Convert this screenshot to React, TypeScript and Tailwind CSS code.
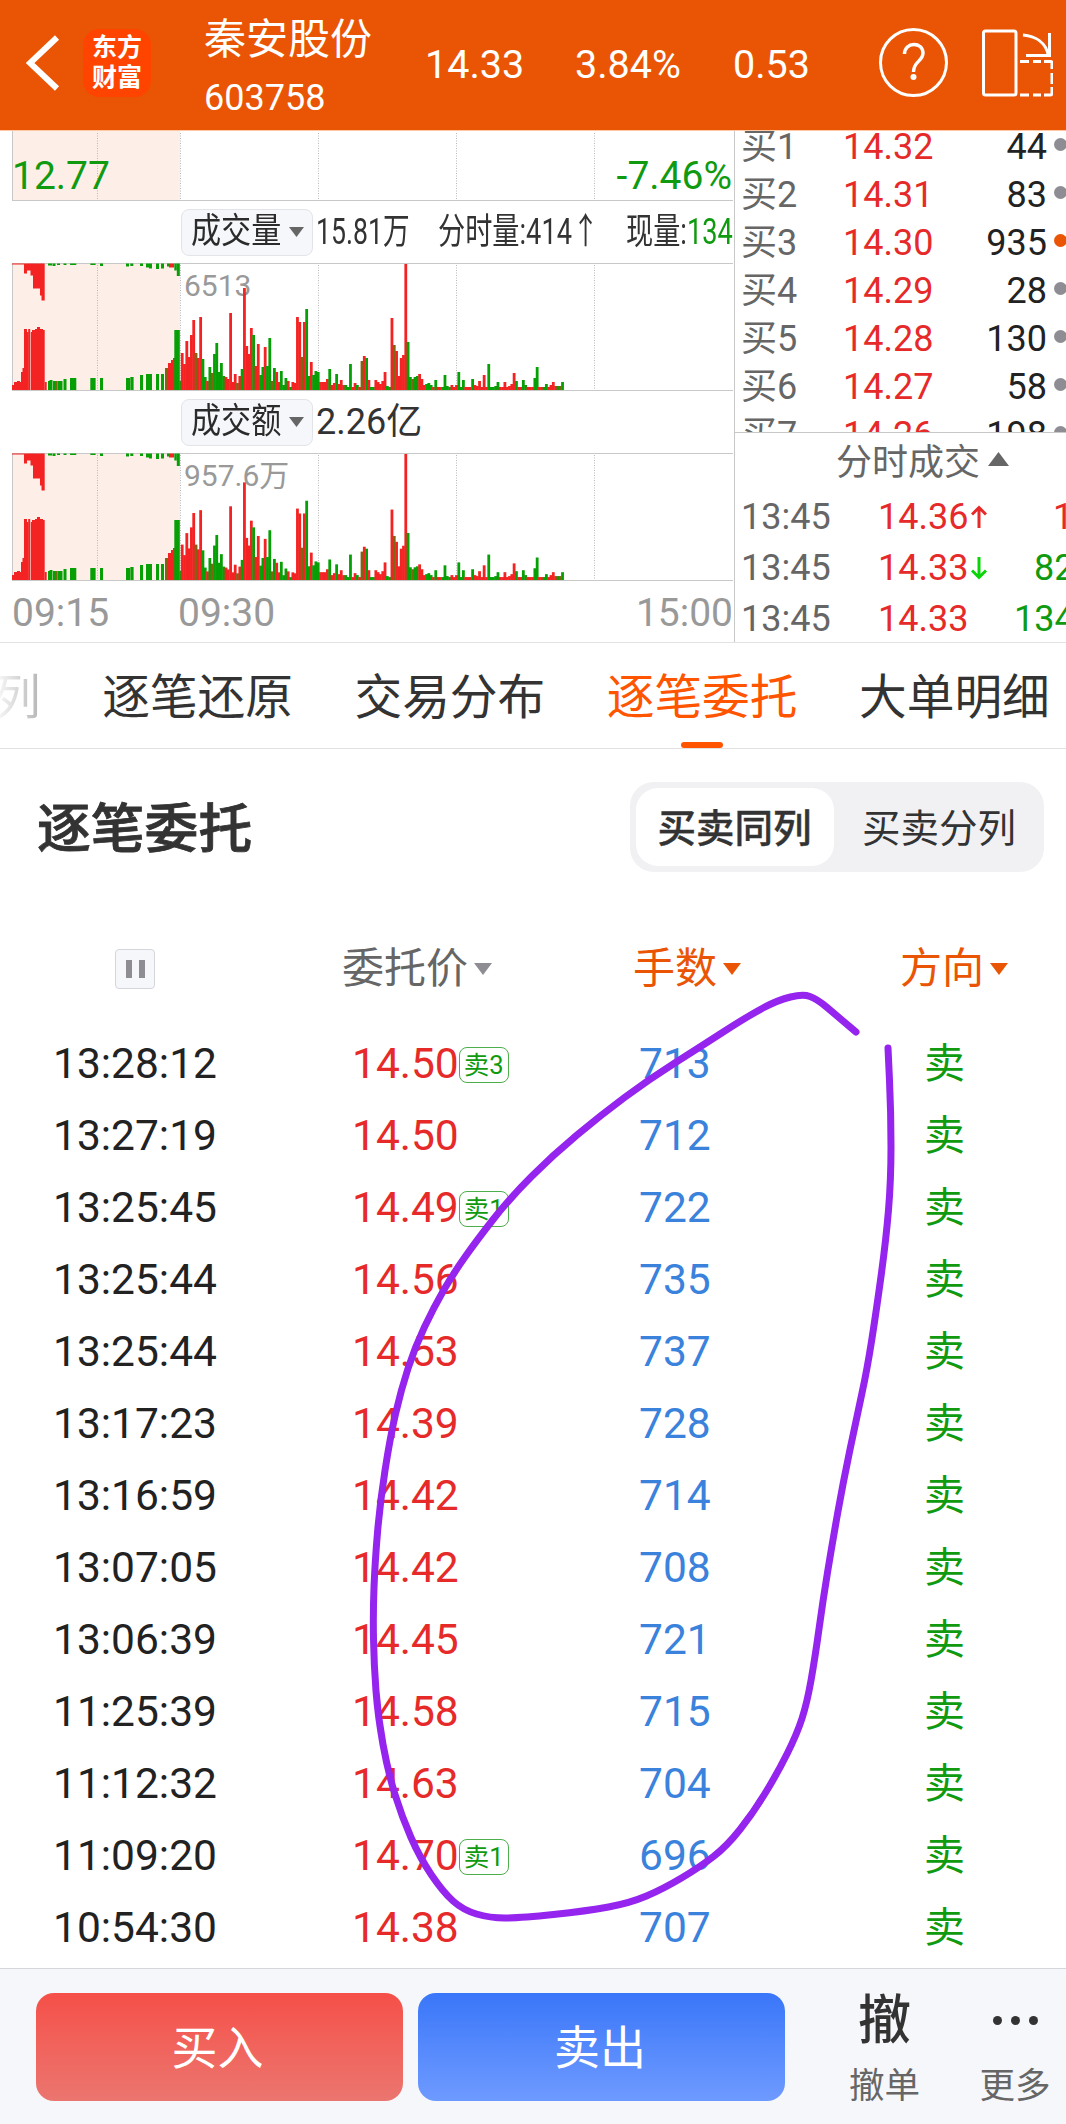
import clsx from "clsx";

type Tone = "r" | "g" | "b";

const toneColor: Record<Tone, string> = {
  r: "#f42323",
  g: "#069f06",
  b: "#7f6412",
};

// one entry per minute from 09:30, tone + height in px
const minuteBars =
  "r37 r26 r49 r33 r55 r70 b37 r32 r73 g31 g13 r9 g23 b17 g36 g47 g18 g27 g14 r13 r11 r77 r8 r16 b7 r14 g21 r102 r44 r36 " +
  "r62 g55 r24 r46 g15 g23 r43 g24 g52 b9 g22 r18 r8 g19 g5 g12 r9 g3 r8 r7 r73 r68 b33 r68 g81 g14 r28 g15 g19 g18 " +
  "r8 r8 r8 r11 g21 r5 r7 g16 r6 r10 r5 g5 g3 g26 r3 r7 g5 r3 b29 r34 g32 r10 g3 g3 r10 r8 r6 r9 r18 g4 " +
  "g3 r72 b45 r39 r14 r32 r35 r126 g48 g13 b11 g13 g14 r16 r11 r5 g6 g7 g5 r3 g10 r3 r3 g3 g15 g4 g3 r5 r3 r5 " +
  "g18 g3 g10 r3 r3 r3 g11 r5 r4 r9 r3 r15 r3 g26 g3 g3 g4 g8 r3 r3 r8 r3 r4 r6 r17 g9 r3 r3 g10 g5 " +
  "r3 r3 r3 g12 g23 r3 r3 g3 g6 r3 r5 r8 r4 g4 b4 g8";

// call auction: [x, width, height, tone]
const auctionBottom: [number, number, number, Tone][] = [
  [0, 2, 5, "r"], [2, 3, 8, "r"], [5, 3, 9, "r"], [8, 2, 8, "r"], [9, 2, 18, "r"], [10.5, 2, 22, "r"],
  [12, 3, 61, "r"], [15, 1.5, 58, "r"], [16.2, 2, 61, "r"], [18.8, 1.5, 58, "r"], [20, 3, 60, "r"],
  [23, 2, 61, "r"], [25, 3, 63, "r"], [28, 3, 61, "r"], [31, 1.7, 60, "r"], [32.7, 2, 8, "r"],
  [36, 2, 9, "g"], [37.5, 3, 10, "g"], [41, 2, 9, "g"], [43, 2.5, 9, "b"], [45.5, 5, 9, "g"], [51.5, 3, 11, "g"],
  [58, 6.3, 12, "g"], [78.3, 5.3, 12, "g"], [88, 3, 12, "g"], [114, 4, 12, "g"], [118.3, 3.3, 13, "g"],
  [128, 3, 15, "g"], [134, 6, 16, "g"], [144, 3, 16, "g"], [149, 3, 16, "g"], [153, 3, 22, "b"],
  [156, 3, 27, "r"], [159, 3, 30, "r"], [161, 2, 32, "b"], [162.3, 5.5, 60, "g"], [167.5, 2, 9, "g"],
];

const auctionTop: [number, number, number, Tone][] = [
  [0, 12, 1, "r"], [12, 3, 10, "r"], [15, 4, 7, "r"], [18.5, 3, 12, "r"], [21, 7, 25, "r"], [28, 2, 32, "r"], [29.5, 3.2, 37, "r"],
  [36, 4, 2, "g"], [40.5, 3, 2.5, "g"], [45, 3, 1.5, "g"], [51.5, 3, 1.5, "g"], [58, 6.3, 1.5, "g"], [78.3, 5.3, 1.5, "g"],
  [88, 3, 2.5, "g"], [114, 3, 3, "g"], [118.3, 3, 2.5, "g"], [128, 3, 2.5, "g"], [134, 3, 4, "g"], [137, 3, 5, "g"],
  [144, 3, 5.5, "g"], [149, 3, 5, "g"], [155, 2, 3, "g"], [157, 5, 4, "r"], [162.3, 2.5, 7, "g"], [164.8, 3, 12.5, "g"],
];

function GridLines({ height }: { height: number }) {
  return (
    <>
      <rect x="0" y="0" width="168" height={height} fill="#fdeee7" />
      {[85.5, 168.5, 306.5, 444.5, 582.5].map((x) => (
        <line key={x} x1={x} x2={x} y1="2" y2={height} stroke="#b9b9b9" strokeWidth="1" strokeDasharray="1 1.5" />
      ))}
      <line x1="0.5" x2="0.5" y1="0" y2={height} stroke="#c8c8c8" />
      <line x1="0" x2="721" y1={height - 0.5} y2={height - 0.5} stroke="#c8c8c8" />
    </>
  );
}

function BarChart({ label, scale }: { label: string; scale: number }) {
  return (
    <div className="relative ml-3 h-[128px] w-[721px]">
      <svg width="721" height="128" className="absolute inset-0">
        <GridLines height={128} />
        <line x1="0" x2="721" y1="0.5" y2="0.5" stroke="#c8c8c8" />
      </svg>
      <div className="relative pl-[172px] pt-[8px] text-[30px] leading-[30px] text-[#999]">{label}</div>
      <svg width="721" height="128" className="absolute inset-0">
        {auctionTop.map(([x, w, h, t]) => (
          <rect key={x} x={x} y="0.5" width={w} height={h} fill={toneColor[t]} />
        ))}
        {auctionBottom.map(([x, w, h, t]) => (
          <rect key={x} x={x} y={127 - h} width={w} height={h} fill={toneColor[t]} />
        ))}
        {minuteBars.split(" ").map((bar, i) => {
          const raw = Number(bar.slice(1));
          const h = raw > 120 ? raw : raw * (i < 50 ? scale : (scale + 1) / 2);
          return (
            <rect key={i} x={168.8 + i * 2.305} y={127 - h} width="2.8" height={h} fill={toneColor[bar[0] as Tone]} />
          );
        })}
      </svg>
    </div>
  );
}

function Caret({ className }: { className?: string }) {
  return (
    <svg viewBox="0 0 18 12" width="18" height="12" className={className}>
      <path d="M0 0H18L9 12Z" fill="currentColor" />
    </svg>
  );
}

function MetricSelect({ label }: { label: string }) {
  return (
    <div className="flex h-[47px] w-[132px] items-center rounded-lg border border-[#e3e4ea] bg-[#f6f7fb] pl-[9px] text-[#2b2b2b]">
      <span className="w-[90px] origin-left scale-x-[0.86] whitespace-nowrap text-[35px] leading-[40px]">{label}</span>
      <Caret className="ml-[8px] h-[12px] w-[15px] text-[#666]" />
    </div>
  );
}

function Header() {
  return (
    <header className="flex h-[131px] items-center border-b border-[#ffc9a6] bg-[#e95504] text-white">
      <svg width="34" height="56" viewBox="0 0 34 56" className="ml-[26px] mt-[-4px]">
        <path d="M31 2.500L4 28L31 53.500" fill="none" stroke="#fff" strokeWidth="6" />
      </svg>
      <div className="ml-[23px] mt-[-5px] flex h-[68px] w-[68px] flex-col items-center justify-center rounded-2xl bg-[#ff4400] text-[25px] font-bold leading-[30px]">
        <span>东方</span>
        <span>财富</span>
      </div>
      <div className="ml-[53px] w-[171px]">
        <div className="mt-[8px] text-[42px] leading-[56px]">秦安股份</div>
        <div className="mt-[2px] text-[36px] leading-[56px]">603758</div>
      </div>
      <div className="flex text-[39.500px] leading-[40px]">
        <span className="ml-[50px] w-[150px]">14.33</span>
        <span className="w-[158px]">3.84%</span>
        <span className="w-[146px]">0.53</span>
      </div>
      <svg width="72" height="72" viewBox="0 0 72 72" className="mt-[-5px]" fill="none" stroke="#fff">
        <circle cx="34.500" cy="35.500" r="33" strokeWidth="3" />
        <path d="M25.500 27C25.500 14.500 44 14.500 44 26C44 34.500 34.500 34 34.500 45" strokeWidth="3.400" />
        <circle cx="34.500" cy="50" r="3" fill="#fff" stroke="none" />
      </svg>
      <svg width="74" height="72" viewBox="0 0 74 72" className="ml-[28px] mt-[-5px]" fill="none" stroke="#fff" strokeWidth="3">
        <rect x="4.500" y="4" width="32.500" height="64" rx="2" />
        <path d="M44 8C56 9 67 15 69.500 29M70.500 6V28.500H47" />
        <path d="M41 34.500H50M54 34.500H62M65 34.500H71.500Q73 34.500 73 36V42M73 46V57M73 60V66Q73 68 71 68H65M62 68H54M50 68H41" />
      </svg>
    </header>
  );
}

function ChartPanel() {
  return (
    <div className="w-[734px] shrink-0 text-[#333]">
      <div className="relative ml-3 h-[70px] w-[721px]">
        <svg width="721" height="70" className="absolute inset-0">
          <GridLines height={70} />
        </svg>
        <div className="relative flex justify-between pr-[1px] pt-[25px] text-[39px] leading-[40px] text-[#0f9a0f]">
          <span>12.77</span>
          <span>-7.46%</span>
        </div>
      </div>
      <div className="flex h-[62px] items-center pl-[181px] text-[36px] leading-[40px]">
        <MetricSelect label="成交量" />
        <span className="ml-[3px] w-[122px] origin-left scale-x-[0.74] whitespace-nowrap">15.81万</span>
        <span className="w-[188px] origin-left scale-x-[0.755] whitespace-nowrap">分时量:414↑</span>
        <span className="w-[104px] origin-left scale-x-[0.755] whitespace-nowrap">
          现量:<span className="text-[#0f9a0f]">134</span>
        </span>
      </div>
      <BarChart label="6513" scale={1} />
      <div className="flex h-[62px] items-center pl-[181px] text-[36px] leading-[40px]">
        <MetricSelect label="成交额" />
        <span className="ml-[3px]">2.26亿</span>
      </div>
      <BarChart label="957.6万" scale={0.957} />
      <div className="flex pl-[12px] pr-[1px] pt-[12px] text-[39px] leading-[40px] text-[#999]">
        <span className="w-[166px]">09:15</span>
        <span className="grow">09:30</span>
        <span>15:00</span>
      </div>
    </div>
  );
}

const bids = [
  ["买1", "14.32", "44"],
  ["买2", "14.31", "83"],
  ["买3", "14.30", "935"],
  ["买4", "14.29", "28"],
  ["买5", "14.28", "130"],
  ["买6", "14.27", "58"],
  ["买7", "14.26", "198"],
];

function TradeArrow({ up }: { up: boolean }) {
  return (
    <svg width="16" height="24" viewBox="0 0 16 24" fill="none" strokeWidth="3" className="mt-[-2px] shrink-0">
      <path
        d={up ? "M8 23V3M1 9.500L8 2.500L15 9.500" : "M8 1V21M1 14.500L8 21.500L15 14.500"}
        stroke={up ? "#e62a2a" : "#08d408"}
      />
    </svg>
  );
}

function OrderBook() {
  return (
    <div className="min-w-0 grow overflow-hidden border-l border-[#c8c8c8] text-[36px]">
      <div className="h-[301px] overflow-hidden">
        <div className="mt-[-8px]">
          {bids.map(([name, price, lots]) => (
            <div key={name} className="flex h-[48px] items-center leading-[48px]">
              <span className="w-[104px] shrink-0 pl-[6px] text-[#666]">{name}</span>
              <span className="w-[108px] shrink-0 pl-[4px] text-[#e62a2a]">{price}</span>
              <span className="w-[100px] shrink-0 text-right text-[#222]">{lots}</span>
              <span
                className={clsx(
                  "ml-[7px] mt-[-6px] size-[13px] shrink-0 rounded-full",
                  lots === "935" ? "bg-[#e95504]" : "bg-[#8e8d93]",
                )}
              />
            </div>
          ))}
        </div>
      </div>
      <div className="flex h-[62px] items-center border-t border-[#c8c8c8] pl-[101px] text-[#666]">
        <span className="mt-[-2px] leading-[40px]">分时成交</span>
        <svg width="21" height="14" viewBox="0 0 21 14" className="ml-[8px] mt-[-9px]">
          <path d="M10.500 0L21 14H0Z" fill="#666" />
        </svg>
      </div>
      <div className="leading-[51px]">
        <div className="mt-[-2px] flex h-[51px] items-center">
          <span className="w-[143px] shrink-0 pl-[6px] text-[#666]">13:45</span>
          <span className="w-[93px] shrink-0 text-[#e62a2a]">14.36</span>
          <TradeArrow up />
          <span className="ml-[66px] text-[#e62a2a]">1</span>
        </div>
        <div className="flex h-[51px] items-center">
          <span className="w-[143px] shrink-0 pl-[6px] text-[#666]">13:45</span>
          <span className="w-[93px] shrink-0 text-[#e62a2a]">14.33</span>
          <TradeArrow up={false} />
          <span className="ml-[47px] text-[#0f9a0f]">82</span>
        </div>
        <div className="flex h-[51px] items-center">
          <span className="w-[143px] shrink-0 pl-[6px] text-[#666]">13:45</span>
          <span className="w-[93px] shrink-0 text-[#e62a2a]">14.33</span>
          <span className="ml-[43px] text-[#0f9a0f]">134</span>
        </div>
      </div>
    </div>
  );
}

function Tabs() {
  const tabs = ["逐笔还原", "交易分布", "逐笔委托", "大单明细"];
  return (
    <nav className="flex h-[107px] gap-[61.500px] overflow-hidden border-y border-[#e2e2e2] text-[47.700px] leading-[111px] text-[#333]">
      <span className="ml-[-7px] shrink-0 bg-linear-to-r from-white to-[#b4b4b4] bg-clip-text text-transparent">列</span>
      {tabs.map((tab) => (
        <span key={tab} className={clsx("relative h-[105px] shrink-0", tab === "逐笔委托" && "text-[#ff5500]")}>
          {tab}
          {tab === "逐笔委托" && (
            <span className="absolute bottom-0 left-[74px] h-[6px] w-[42px] rounded-full bg-[#ff5500]" />
          )}
        </span>
      ))}
    </nav>
  );
}

const orders = [
  { time: "13:28:12", price: "14.50", tag: "卖3", lots: 713 },
  { time: "13:27:19", price: "14.50", lots: 712 },
  { time: "13:25:45", price: "14.49", tag: "卖1", lots: 722 },
  { time: "13:25:44", price: "14.56", lots: 735 },
  { time: "13:25:44", price: "14.53", lots: 737 },
  { time: "13:17:23", price: "14.39", lots: 728 },
  { time: "13:16:59", price: "14.42", lots: 714 },
  { time: "13:07:05", price: "14.42", lots: 708 },
  { time: "13:06:39", price: "14.45", lots: 721 },
  { time: "11:25:39", price: "14.58", lots: 715 },
  { time: "11:12:32", price: "14.63", lots: 704 },
  { time: "11:09:20", price: "14.70", tag: "卖1", lots: 696 },
  { time: "10:54:30", price: "14.38", lots: 707 },
];

function OrderTable() {
  return (
    <section>
      <div className="flex h-[156px] items-center justify-between pl-[37px] pr-[22px]">
        <h1 className="mt-[5px] text-[53.800px] font-medium leading-[60px] text-[#333] [-webkit-text-stroke:0.8px_#333]">
          逐笔委托
        </h1>
        <div className="flex h-[90px] w-[414px] rounded-[24px] bg-[#f1f1f4] p-[6px] text-center text-[38.500px] leading-[82px] text-[#333]">
          <span className="h-[78px] w-[198px] rounded-[22px] bg-white pr-[1px] font-medium [-webkit-text-stroke:0.4px_#333]">
            买卖同列
          </span>
          <span className="grow pl-[6px]">买卖分列</span>
        </div>
      </div>

      <div className="mt-[38px] flex h-[52px] items-center text-[42px] leading-[58px] text-[#e95504]">
        <div className="w-[342px] pl-[115px]">
          <div className="flex size-[40px] items-center justify-center gap-[7px] rounded border border-[#d5d6db] bg-[#f6f7fb]">
            <span className="h-[18px] w-[6px] bg-[#8e8d93]" />
            <span className="h-[18px] w-[6px] bg-[#8e8d93]" />
          </div>
        </div>
        <div className="flex w-[291px] items-center gap-[6px] text-[#666]">
          委托价
          <Caret className="text-[#8e8d93]" />
        </div>
        <div className="flex w-[267px] items-center gap-[6px]">
          手数
          <Caret />
        </div>
        <div className="flex items-center gap-[6px]">
          方向
          <Caret />
        </div>
      </div>

      <div className="mt-[33px]">
        {orders.map((o) => (
          <div key={o.time + o.price} className="flex h-[72px] items-center text-[42.500px] leading-[74px]">
            <span className="w-[352px] pl-[53px] text-[#222]">{o.time}</span>
            <span className="flex w-[287px] items-center text-[#e62a2a]">
              {o.price}
              {o.tag && (
                <span className="mt-[1px] h-[36px] w-[50px] rounded-lg border border-[#4caf4c] text-center text-[25.500px] leading-[34px] text-[#0f9a0f]">
                  {o.tag}
                </span>
              )}
            </span>
            <span className="w-[285px] text-[#3a82dc]">{o.lots}</span>
            <span className="text-[41px] leading-[75px] text-[#0f9a0f]">卖</span>
          </div>
        ))}
      </div>
    </section>
  );
}

function BottomBar() {
  return (
    <footer className="mt-[4px] flex h-[156px] border-t border-[#d5d6db] bg-[#f6f7fb] text-[46px] text-white">
      <button className="ml-[36px] mt-[24px] h-[108px] w-[367px] rounded-[18px] bg-linear-to-b from-[#f54f48] to-[#eb756f] pr-[4px] pt-[3px]">
        买入
      </button>
      <button className="ml-[15px] mt-[24px] h-[108px] w-[367px] rounded-[18px] bg-linear-to-b from-[#3a76f9] to-[#6e9aff] pr-[3px] pt-[3px]">
        卖出
      </button>
      <div className="ml-[60px] mt-[18px] flex w-[79px] flex-col items-center text-[#333]">
        <span className="text-[53px] font-medium leading-[69px]">撤</span>
        <span className="text-[35.500px] leading-[60px] text-[#666]">撤单</span>
      </div>
      <div className="ml-[51px] mt-[18px] flex w-[80px] shrink-0 flex-col items-center text-[#333]">
        <span className="flex h-[69px] items-center gap-[9px] pb-[2px]">
          <i className="size-[9px] rounded-full bg-[#333]" />
          <i className="size-[9px] rounded-full bg-[#333]" />
          <i className="size-[9px] rounded-full bg-[#333]" />
        </span>
        <span className="text-[35.500px] leading-[60px] text-[#666]">更多</span>
      </div>
    </footer>
  );
}

const strokePoints: [number, number][] = [
  [856, 1032], [836, 1015], [817, 999], [803, 994], [778, 1000], [748, 1016], [700, 1047], [648, 1080], [601, 1115],
  [553, 1155], [510, 1198], [477, 1240], [453, 1274], [434, 1307], [415, 1347], [401, 1390], [390, 1438], [380, 1503],
  [375, 1562], [373, 1613], [374, 1665], [378, 1717], [388, 1772], [402, 1817], [420, 1858], [443, 1892], [463, 1910],
  [490, 1918], [520, 1918], [587, 1911], [630, 1903], [663, 1889], [700, 1867], [727, 1846], [753, 1813], [777, 1774],
  [797, 1734], [807, 1703], [815, 1658], [823, 1600], [832, 1545], [843, 1483], [857, 1416], [867, 1370], [876, 1313],
  [886, 1240], [891, 1180], [891, 1113], [888, 1048],
];

// runs quadratic curves through the midpoints so the line stays soft
function smoothPath(pts: [number, number][]) {
  let d = `M${pts[0][0]} ${pts[0][1]}`;
  for (let i = 1; i < pts.length - 1; i++) {
    const [x, y] = pts[i];
    const [nx, ny] = pts[i + 1];
    d += `Q${x} ${y} ${(x + nx) / 2} ${(y + ny) / 2}`;
  }
  const last = pts[pts.length - 1];
  return `${d}L${last[0]} ${last[1]}`;
}

export default function App() {
  return (
    <div className="relative h-[2124px] w-[1066px] overflow-hidden bg-white font-[Roboto,'Noto_Sans_CJK_SC',sans-serif]">
      <Header />
      <main>
        <div className="flex h-[511px]">
          <ChartPanel />
          <OrderBook />
        </div>
        <Tabs />
        <OrderTable />
      </main>
      <BottomBar />
      {/* hand-drawn marker */}
      <svg width="1066" height="2124" className="pointer-events-none absolute inset-0">
        <path d={smoothPath(strokePoints)} fill="none" stroke="#9424ee" strokeWidth="7" strokeLinejoin="round" strokeLinecap="round" />
      </svg>
    </div>
  );
}
